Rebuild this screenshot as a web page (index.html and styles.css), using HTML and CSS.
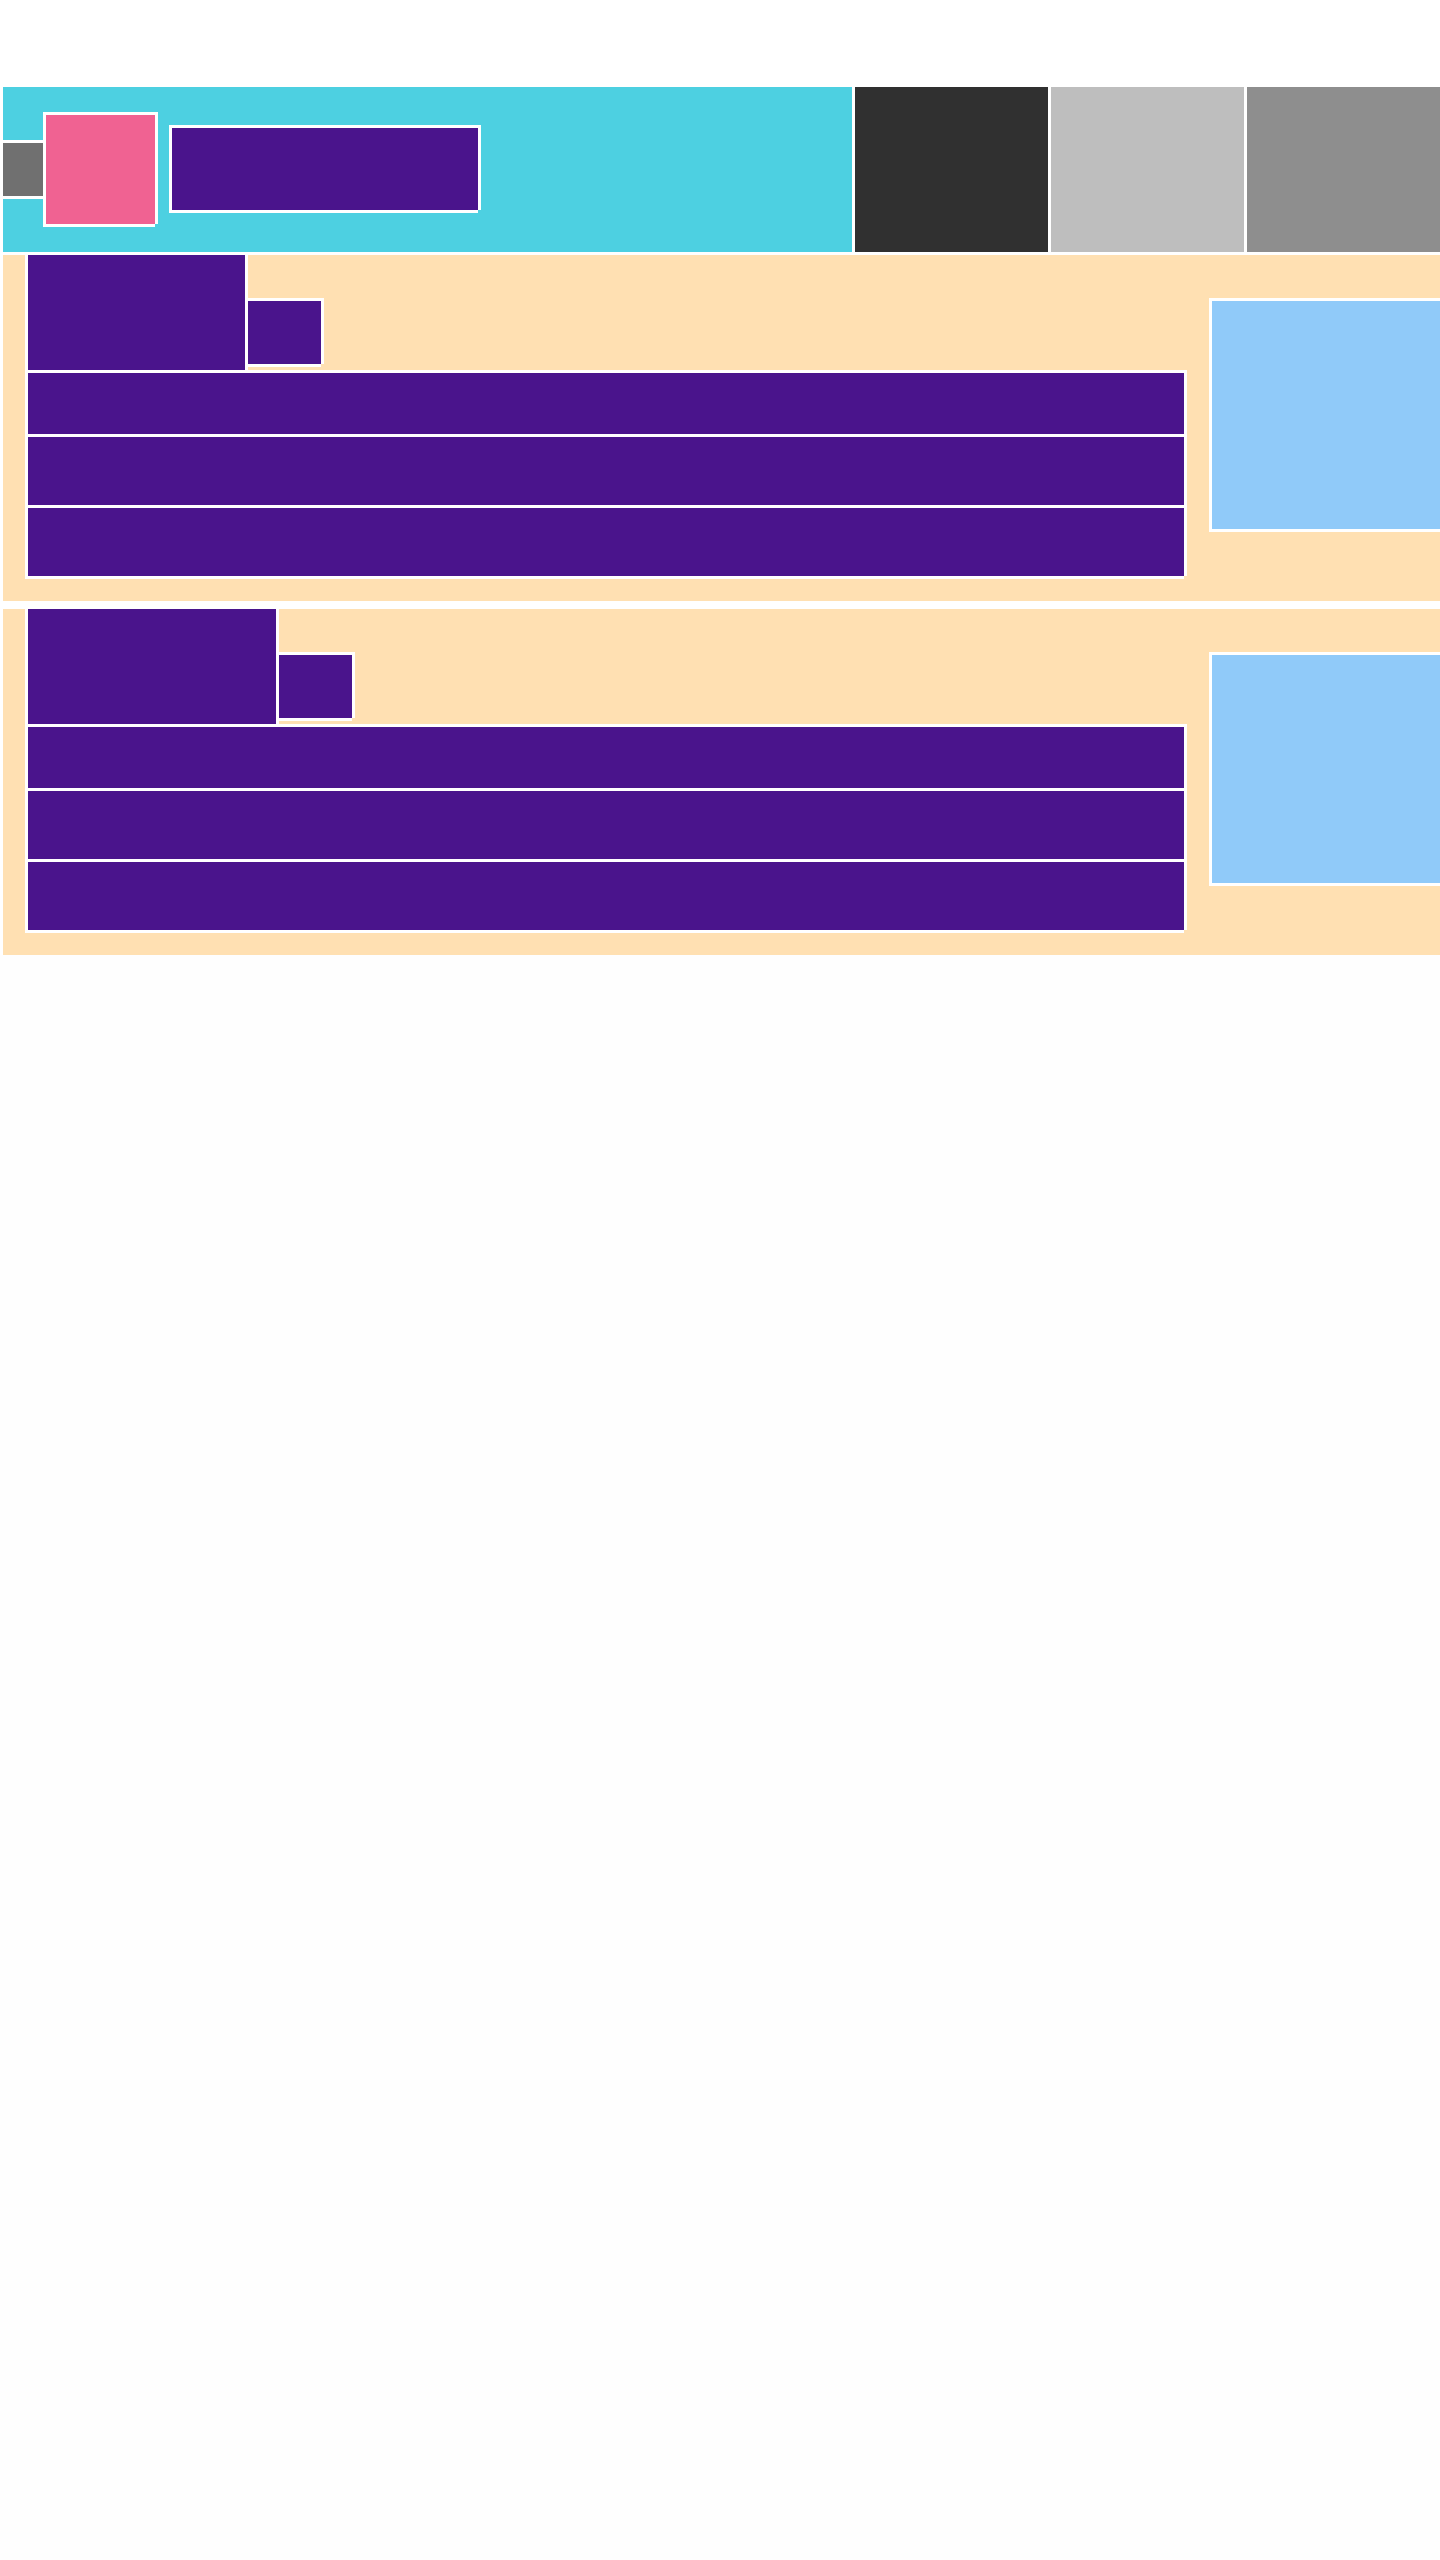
FILE: index.html
```html
<!DOCTYPE html>
<html>
<head>
    <title>Listing</title>
    <link rel="stylesheet" href="styles.css">
</head>
<body>
    <div class="page">
        <header class="top">
            <div class="blk hero">
                <div class="blk menu"></div>
                <div class="blk logo"></div>
                <div class="blk brand"></div>
            </div>
            <div class="blk tile tile-dark"></div>
            <div class="blk tile tile-light"></div>
            <div class="blk tile tile-mid"></div>
        </header>

        <section class="blk card">
            <div class="card-body">
                <div class="main">
                    <div class="head">
                        <div class="blk title"></div>
                        <div class="blk tag"></div>
                    </div>
                    <div class="blk row row-first"></div>
                    <div class="blk row"></div>
                    <div class="blk row"></div>
                </div>
                <div class="blk thumb"></div>
            </div>
        </section>

        <section class="blk card">
            <div class="card-body">
                <div class="main">
                    <div class="head">
                        <div class="blk title title-wide"></div>
                        <div class="blk tag"></div>
                    </div>
                    <div class="blk row row-first"></div>
                    <div class="blk row"></div>
                    <div class="blk row"></div>
                </div>
                <div class="blk thumb"></div>
            </div>
        </section>
    </div>
</body>
</html>
```

FILE: styles.css
```css
html {
    background-color: #fefefe;
}

body {
    margin: 0;
    background-color: #ffffff;
    font-family: 'Liberation Sans', Arial, sans-serif;
}

* {
    box-sizing: border-box;
}

.page {
    width: 1440px;
    padding-top: 84px;
    overflow: hidden;
}

/* every box gets a white edge: border on top/left, shadow on right/bottom */
.blk {
    border-top: 3px solid #ffffff;
    border-left: 3px solid #ffffff;
    box-shadow: 3px 0 0 #ffffff, 0 3px 0 #ffffff;
    flex-shrink: 0;
}

.top {
    display: flex;
    height: 168px;
}

.hero {
    width: 852px;
    height: 168px;
    background-color: #4dd0e1;
    display: flex;
    align-items: flex-start;
}

.menu {
    width: 40px;
    height: 56px;
    margin-top: 53px;
    border-left: 0;
    background-color: #707070;
}

.logo {
    width: 112px;
    height: 112px;
    margin-top: 25px;
    background-color: #f06292;
}

.brand {
    width: 309px;
    height: 85px;
    margin-top: 38px;
    margin-left: 14px;
    background-color: #4a148c;
}

.tile {
    width: 196px;
    height: 168px;
}

.tile-dark {
    background-color: #303030;
}

.tile-light {
    background-color: #bebebe;
}

.tile-mid {
    background-color: #8e8e8e;
}

.card {
    width: 1440px;
    background-color: #ffe0b2;
    padding: 0 0 25px 22px;
}

.card + .card {
    margin-top: 5px;
}

.card-body {
    display: flex;
    align-items: flex-start;
    margin-top: -3px;
}

.main {
    width: 1159px;
}

.head {
    display: flex;
    align-items: flex-start;
}

.title {
    width: 220px;
    height: 118px;
    background-color: #4a148c;
}

.title-wide {
    width: 251px;
}

.tag {
    width: 76px;
    height: 66px;
    margin-top: 46px;
    background-color: #4a148c;
}

.row {
    height: 71px;
    background-color: #4a148c;
}

.row-first {
    height: 64px;
}

.thumb {
    width: 231px;
    height: 231px;
    margin-top: 46px;
    margin-left: 25px;
    background-color: #90caf9;
}
```
